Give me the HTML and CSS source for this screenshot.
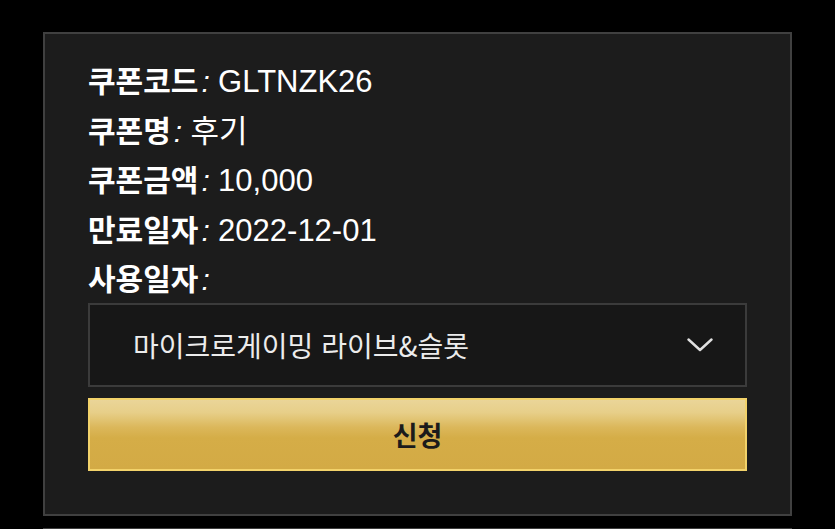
FILE: index.html
```html
<!DOCTYPE html>
<html lang="ko">
<head>
<meta charset="utf-8">
<link rel="stylesheet" href="styles.css">
</head>
<body>
<div class="card">
  <div class="row"><b class="k">쿠폰코드</b><i class="colon">:</i> <span class="v">GLTNZK26</span></div>
  <div class="row"><b class="k">쿠폰명</b><i class="colon">:</i> <span class="v">후기</span></div>
  <div class="row"><b class="k">쿠폰금액</b><i class="colon">:</i> <span class="v">10,000</span></div>
  <div class="row"><b class="k">만료일자</b><i class="colon">:</i> <span class="v">2022-12-01</span></div>
  <div class="row"><b class="k">사용일자</b><i class="colon">:</i></div>
  <div class="select">
    <span class="sel-text">마이크로게이밍 라이브&amp;슬롯</span>
    <svg class="chev" width="26" height="14" viewBox="0 0 26 14"><path d="M1.5 1.5 L13 12 L24.5 1.5" fill="none" stroke="#e0e0e0" stroke-width="2.4" stroke-linecap="round" stroke-linejoin="round"/></svg>
  </div>
  <div class="btn">신청</div>
</div>
<div class="card next"></div>
</body>
</html>
```
FILE: styles.css
```css
html, body {
  margin: 0;
  padding: 0;
  background: #000;
}
body {
  font-family: "Liberation Sans", "Noto Sans CJK KR", sans-serif;
  overflow: hidden;
  height: 529px;
}
.card {
  box-sizing: border-box;
  width: 749px;
  margin: 32px 0 0 43px;
  border: 2px solid #404040;
  background: #1c1c1c;
  padding: 21px 43px 43px;
}
.card.next {
  margin-top: 12px;
  height: 200px;
}
.row {
  height: 49.5px;
  font-size: 30px;
  line-height: 49.5px;
  color: #fff;
  white-space: nowrap;
}
.k {
  font-family: "Noto Sans CJK KR", sans-serif;
  font-weight: 700;
  font-size: 30px;
  letter-spacing: 0;
}
.colon {
  font-style: italic;
  margin-left: 3px;
}
.v {
  font-weight: 400;
  font-size: 31px;
}
.select {
  box-sizing: border-box;
  height: 84px;
  border: 2px solid #3b3b3b;
  background: #171717;
  display: flex;
  align-items: center;
  justify-content: space-between;
  padding: 0 32px 0 43px;
}
.sel-text {
  font-family: "Noto Sans CJK KR", sans-serif;
  font-size: 28px;
  color: #ececec;
}
.chev {
  display: block;
  margin-top: 0;
}
.btn {
  box-sizing: border-box;
  height: 73px;
  margin-top: 11px;
  border: 2px solid #f2d26a;
  background: linear-gradient(to bottom, #ead598 0%, #e7cf89 18%, #dbb75a 40%, #d5ad47 55%, #d3aa45 100%);
  display: flex;
  align-items: center;
  justify-content: center;
  font-family: "Noto Sans CJK KR", sans-serif;
  font-weight: 700;
  font-size: 27px;
  color: #1b1b1b;
}
```
